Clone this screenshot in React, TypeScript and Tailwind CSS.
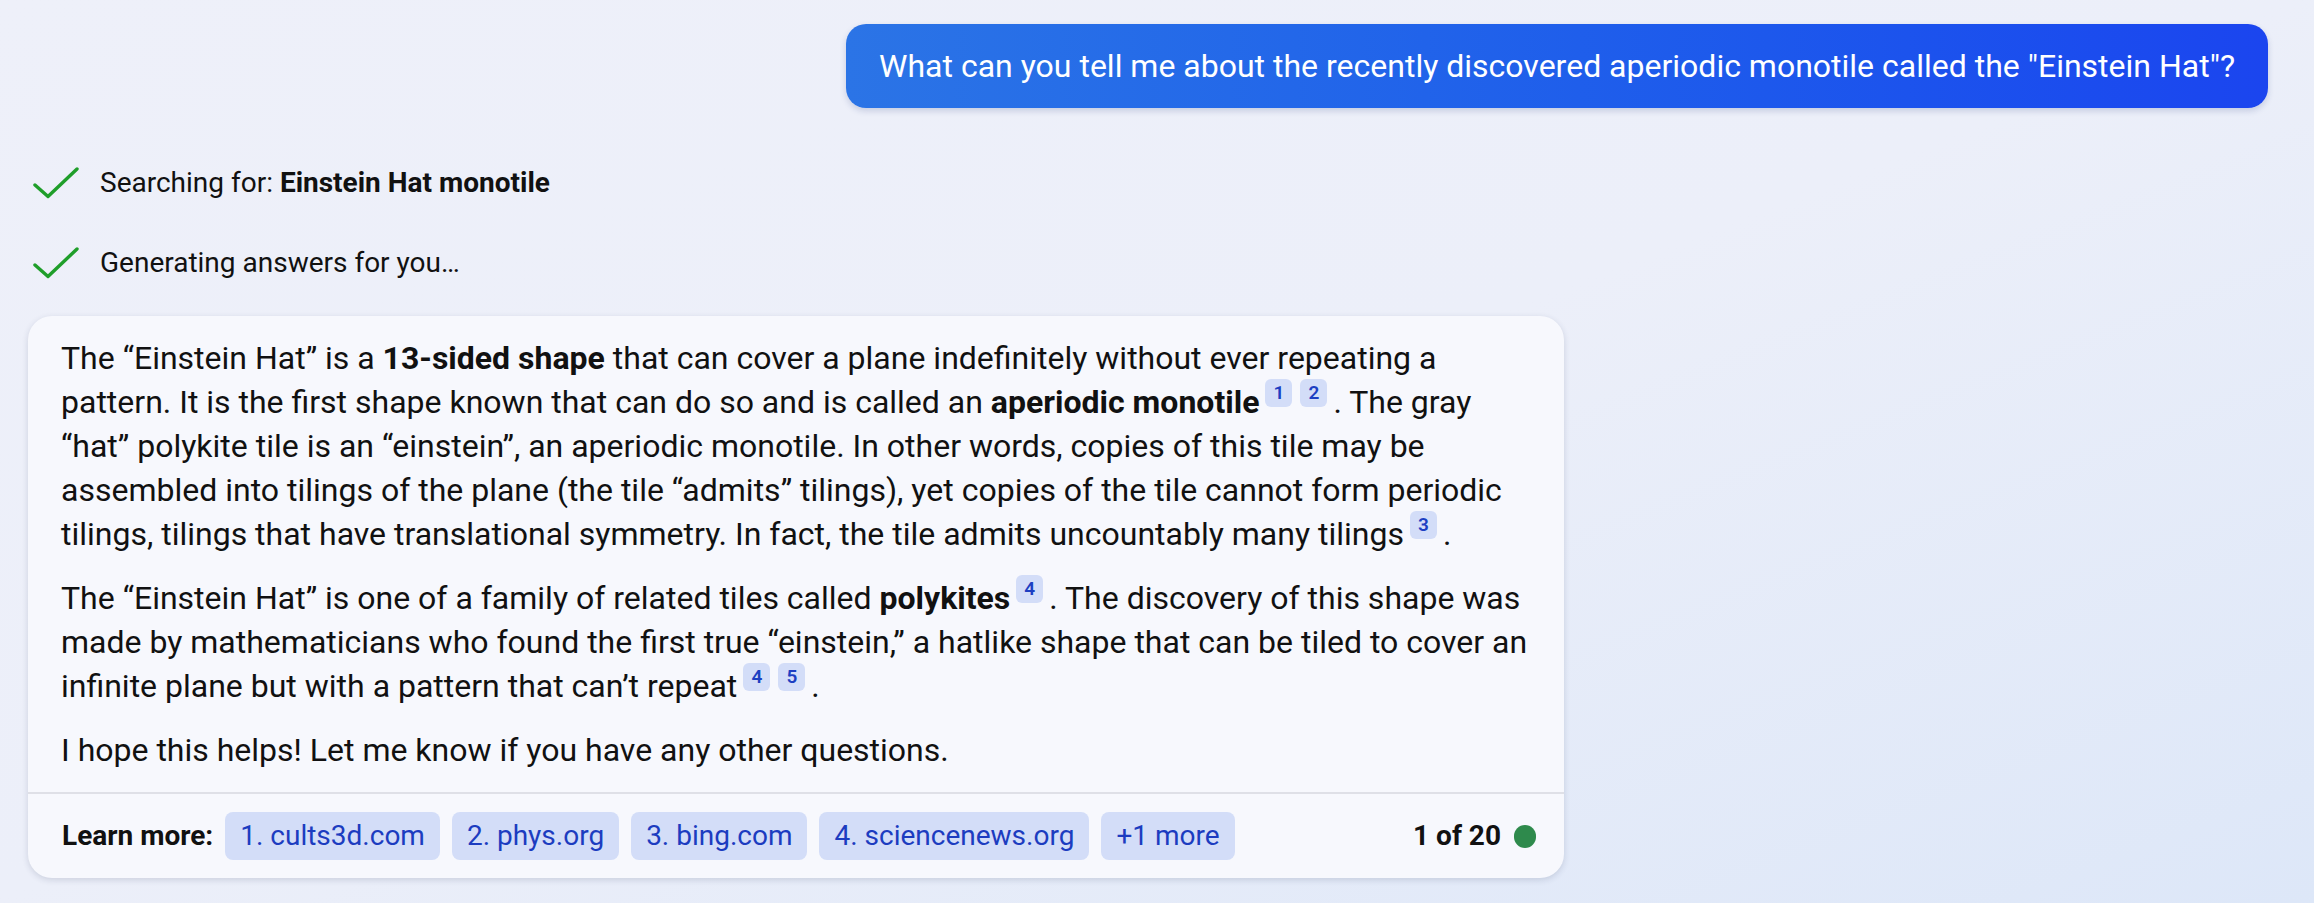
import React from 'react';

const sources = ['1. cults3d.com', '2. phys.org', '3. bing.com', '4. sciencenews.org', '+1 more'];

function Cite({ nums }: { nums: number[] }) {
  return (
    <span className="relative -top-[14px] mx-[6px] inline-flex gap-[8px]">
      {nums.map((n) => (
        <span
          key={n}
          className="inline-flex h-[28px] min-w-[27px] items-center justify-center rounded-[6px] bg-[#d3ddf8] px-[7px] text-[19px] leading-none font-semibold text-[#1d3fc2]"
        >
          {n}
        </span>
      ))}
    </span>
  );
}

function CheckIcon() {
  return (
    <svg width="46" height="32" viewBox="0 0 46 32" fill="none" className="shrink-0">
      <polyline
        points="2,18 15,29.5 44,2"
        stroke="#1f9e2a"
        strokeWidth="3.4"
        strokeLinecap="round"
        strokeLinejoin="round"
      />
    </svg>
  );
}

function StatusRow({ children }: { children: React.ReactNode }) {
  return (
    <div className="flex h-[40px] items-center">
      <div className="ml-[33px] flex w-[67px] items-center">
        <CheckIcon />
      </div>
      <span className="text-[28px] leading-[40px] text-[#111111]">{children}</span>
    </div>
  );
}

export default function App() {
  return (
    <div className="h-[903px] w-full overflow-hidden bg-linear-to-br from-[#eef0f9] via-[#eceff9] to-[#dde7f8] font-[Roboto,sans-serif]">
      {/* user message */}
      <div className="flex justify-end pt-[24px] pr-[46px]">
        <div className="rounded-[20px] bg-linear-to-r from-[#2b74e6] to-[#1b45ef] px-[33px] py-[20px] text-[32px] leading-[44px] text-white shadow-[0_3px_6px_rgba(30,50,120,0.18)]">
          What can you tell me about the recently discovered aperiodic monotile called the "Einstein Hat"?
        </div>
      </div>

      {/* progress */}
      <div className="mt-[55px] flex flex-col gap-[40px]">
        <StatusRow>
          Searching for: <b className="font-bold">Einstein Hat monotile</b>
        </StatusRow>
        <StatusRow>Generating answers for you…</StatusRow>
      </div>

      {/* answer card */}
      <div className="mt-[33px] ml-[28px] w-[1536px] overflow-hidden rounded-[24px] bg-[#f7f8fd] shadow-[0_2px_6px_rgba(40,50,90,0.16)]">
        <div className="px-[33px] pt-[20px] pb-[20px] text-[32px] leading-[44px] text-[#111111]">
          <p className="mb-[20px]">
            The “Einstein Hat” is a <b>13-sided shape</b> that can cover a plane indefinitely without ever repeating a
            pattern. It is the first shape known that can do so and is called an <b>aperiodic monotile</b>
            <Cite nums={[1, 2]} />. The gray “hat” polykite tile is an “einstein”, an aperiodic monotile. In other words,
            copies of this tile may be assembled into tilings of the plane (the tile “admits” tilings), yet copies of the
            tile cannot form periodic tilings, tilings that have translational symmetry. In fact, the tile admits
            uncountably many tilings
            <Cite nums={[3]} />.
          </p>
          <p className="mb-[20px]">
            The “Einstein Hat” is one of a family of related tiles called <b>polykites</b>
            <Cite nums={[4]} />. The discovery of this shape was made by mathematicians who found the first true
            “einstein,” a hatlike shape that can be tiled to cover an infinite plane but with a pattern that can’t repeat
            <Cite nums={[4, 5]} />.
          </p>
          <p>I hope this helps! Let me know if you have any other questions.</p>
        </div>

        <div className="flex items-center border-t-2 border-[#dfe0e7] pt-[18px] pr-[28px] pb-[18px] pl-[34px] text-[28px]">
          <span className="mr-[12px] font-bold text-[#111111]">Learn more:</span>
          <div className="flex gap-[12px]">
            {sources.map((s) => (
              <span
                key={s}
                className="flex h-[48px] items-center rounded-[8px] bg-[#d3ddf8] px-[15px] text-[#1c3cc0]"
              >
                {s}
              </span>
            ))}
          </div>
          <div className="ml-auto flex items-center gap-[13px]">
            <span className="font-bold text-[#111111]">1 of 20</span>
            <span className="h-[23px] w-[22px] rounded-full bg-[#2e8a4c]" />
          </div>
        </div>
      </div>
    </div>
  );
}
